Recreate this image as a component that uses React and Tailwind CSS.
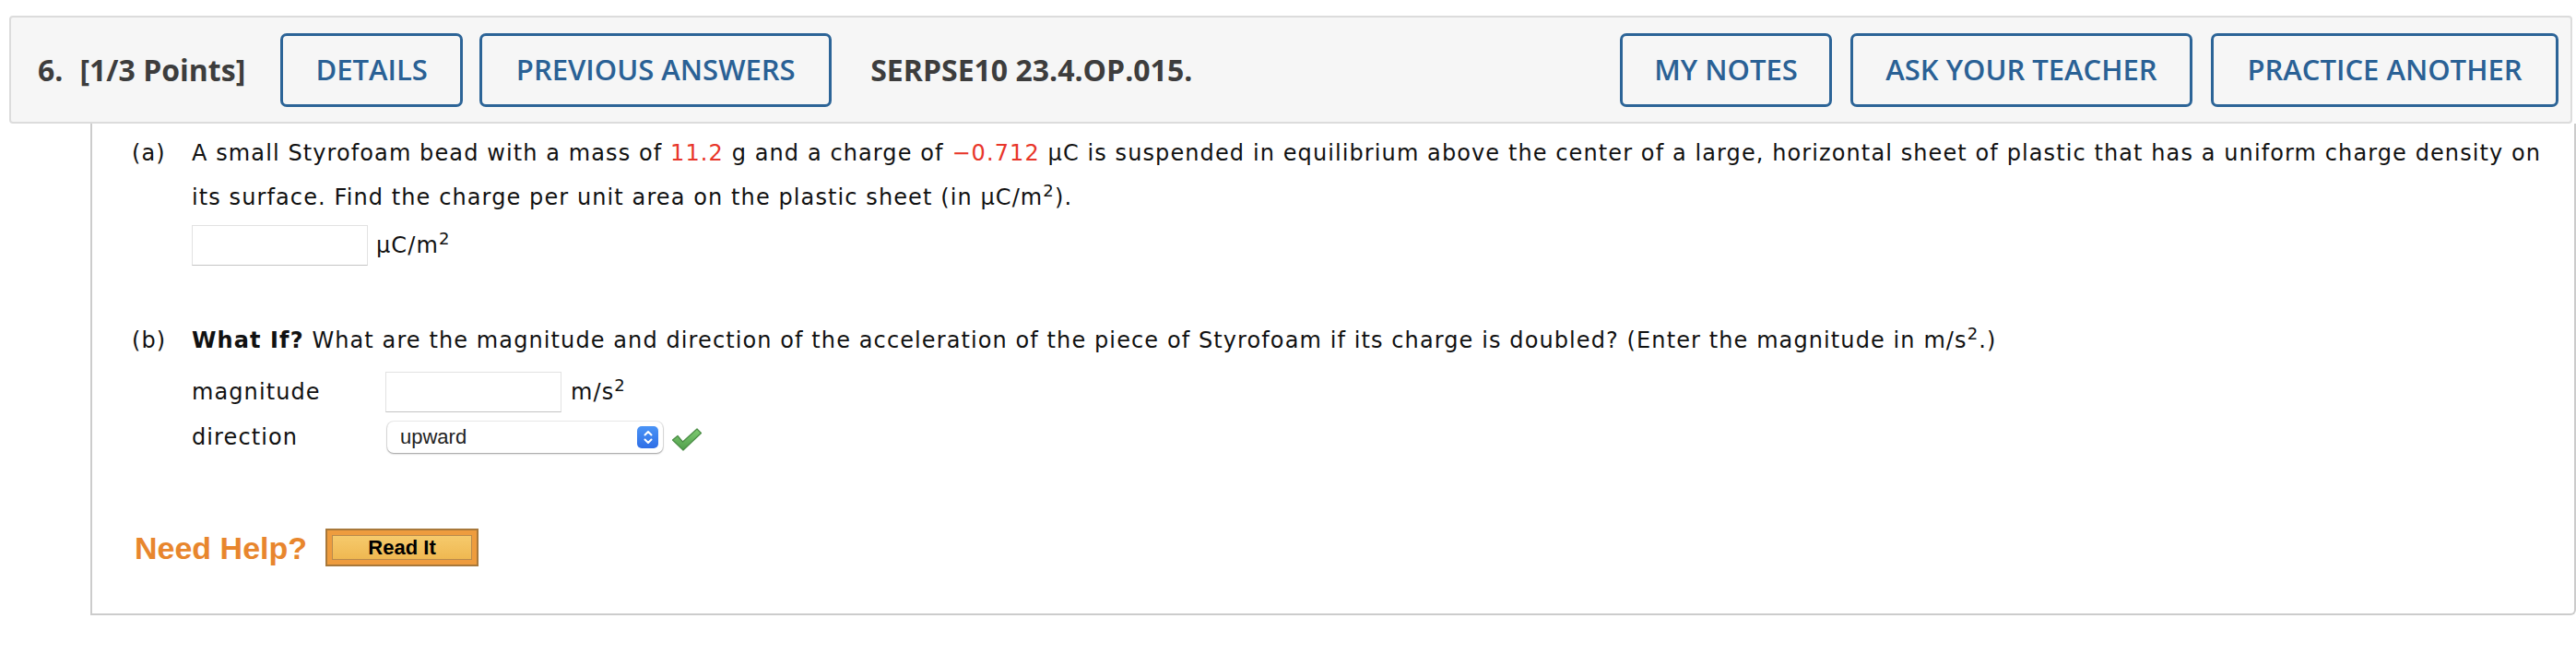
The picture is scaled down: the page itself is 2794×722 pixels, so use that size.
import React from 'react';

const body = { fontFamily: '"DejaVu Sans", Verdana, sans-serif' };
const heading = { fontFamily: '"Open Sans", "Liberation Sans", sans-serif' };
const arial = { fontFamily: '"Liberation Sans", Arial, sans-serif' };

const OutlineButton = ({ label, width }) => (
  <button
    className={`h-[80px] shrink-0 rounded-[7px] border-[3px] border-[#2c6497] bg-[#f6f6f6] text-[31px] font-semibold tracking-normal text-[#2a6195] ${width}`}
    style={heading}
  >
    {label}
  </button>
);

const Red = ({ children }) => <span className="text-[#e8362a]">{children}</span>;

const AnswerBox = ({ width = 'w-[191px]' }) => (
  <div className={`h-[44px] ${width} shrink-0 border border-[#e2e2e2] border-b-[#c4c4c4] bg-white`} />
);

const Stepper = () => (
  <div className="flex h-[24px] w-[23px] items-center justify-center rounded-[5px] bg-gradient-to-b from-[#4b94f6] to-[#2f6ee6]">
    <svg width="12" height="18" viewBox="0 0 12 18" fill="none" stroke="white" strokeWidth="2" strokeLinecap="round" strokeLinejoin="round">
      <path d="M2.5 6.5 L6 3 L9.5 6.5" />
      <path d="M2.5 11.5 L6 15 L9.5 11.5" />
    </svg>
  </div>
);

const Check = () => (
  <svg width="34" height="27" viewBox="0 0 34 27">
    <defs>
      <linearGradient id="chk" x1="0" y1="0" x2="0" y2="1">
        <stop offset="0" stopColor="#7fcb72" />
        <stop offset="1" stopColor="#4f9e4a" />
      </linearGradient>
    </defs>
    <path
      d="M1.5 14 L7 9.5 L12.5 16 L28 2 L32.5 6.5 L13 25 Z"
      fill="url(#chk)"
      stroke="#4a8c45"
      strokeWidth="1.2"
      strokeLinejoin="round"
    />
  </svg>
);

export default function App() {
  return (
    <div className="min-h-[722px] bg-white text-[24px] text-[#111]" style={body}>
      <div
        className="ml-[10px] mr-[4px] mt-[17px] flex h-[117px] items-center rounded-[4px] border-2 border-[#dcdcdc] bg-[#f6f6f6] pl-[29px] pr-[13px] text-[#3d3d3d]"
        style={heading}
      >
        <span className="text-[32px] font-bold">6.</span>
        <span className="ml-[18px] text-[32px] font-bold">[1/3 Points]</span>
        <div className="ml-[38px] flex gap-[18px]">
          <OutlineButton label="DETAILS" width="w-[198px]" />
          <OutlineButton label="PREVIOUS ANSWERS" width="w-[382px]" />
        </div>
        <span className="ml-[42px] text-[32px] font-bold">SERPSE10 23.4.OP.015.</span>
        <div className="ml-auto flex gap-[20px]">
          <OutlineButton label="MY NOTES" width="w-[230px]" />
          <OutlineButton label="ASK YOUR TEACHER" width="w-[371px]" />
          <OutlineButton label="PRACTICE ANOTHER" width="w-[377px]" />
        </div>
      </div>

      <div className="ml-[98px] h-[533px] rounded-br-[6px] border-b-2 border-l-2 border-r-2 border-[#cccccc] pl-[43px] pt-[8px] leading-[48px] tracking-[1.1px]">
        <div className="flex">
          <span className="w-[65px] shrink-0">(a)</span>
          <div>
            <p>
              A small Styrofoam bead with a mass of <Red>11.2</Red> g and a charge of <Red>−0.712</Red> μC is
              suspended in equilibrium above the center of a large, horizontal sheet of plastic that has a uniform
              charge density on
              <br />
              its surface. Find the charge per unit area on the plastic sheet (in μC/m<sup>2</sup>).
            </p>
            <div className="mt-[4px] flex items-center gap-[9px]">
              <AnswerBox />
              <span>
                μC/m<sup>2</sup>
              </span>
            </div>
          </div>
        </div>

        <div className="mt-[55px] flex">
          <span className="w-[65px] shrink-0">(b)</span>
          <div>
            <p>
              <b>What If?</b> What are the magnitude and direction of the acceleration of the piece of Styrofoam if
              its charge is doubled? (Enter the magnitude in m/s<sup>2</sup>.)
            </p>
            <div className="mt-[10px] flex h-[44px] items-center">
              <span className="w-[210px] shrink-0">magnitude</span>
              <AnswerBox />
              <span className="ml-[10px]">
                m/s<sup>2</sup>
              </span>
            </div>
            <div className="mt-[10px] flex h-[34px] items-center">
              <span className="w-[210px] shrink-0">direction</span>
              <div className="ml-[2px] flex h-[34px] w-[299px] items-center justify-between rounded-[7px] bg-white pl-[14px] pr-[5px] shadow-[0_0_0_1px_rgba(0,0,0,0.08),0_1px_2px_rgba(0,0,0,0.35)]">
                <span className="text-[22px] leading-none tracking-normal text-[#222]" style={arial}>
                  upward
                </span>
                <Stepper />
              </div>
              <span className="ml-[9px] mt-[4px] flex">
                <Check />
              </span>
            </div>
          </div>
        </div>

        <div className="mt-[82px] flex h-[41px] items-center tracking-normal" style={arial}>
          <span className="ml-[3px] text-[34px] font-bold text-[#e8862d]">Need Help?</span>
          <button className="ml-[20px] h-[41px] w-[166px] border-2 border-[#a8783a] bg-[#ee9c3e] p-[5px]">
            <span className="flex h-full w-full items-center justify-center border border-[#b98a4c] bg-gradient-to-b from-[#f6ca6c] to-[#efb851] text-[22px] font-bold text-black">
              Read It
            </span>
          </button>
        </div>
      </div>
    </div>
  );
}
